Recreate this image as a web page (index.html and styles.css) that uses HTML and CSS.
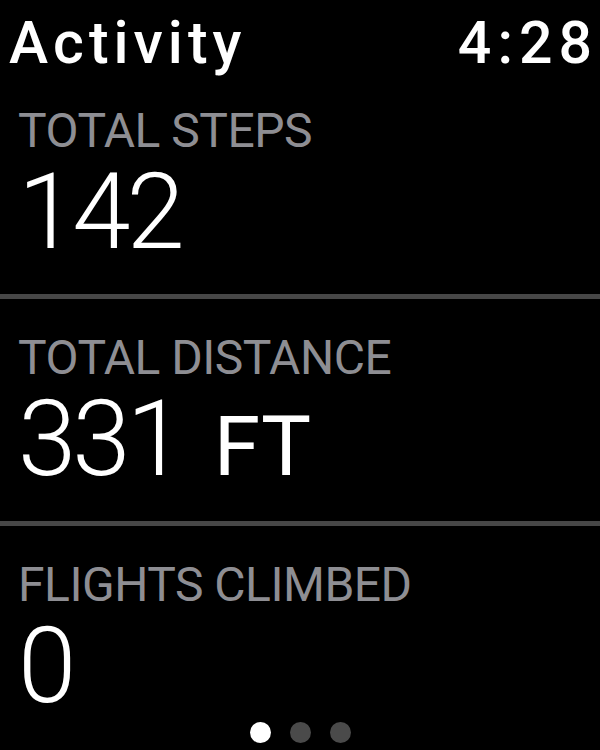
FILE: index.html
```html
<!DOCTYPE html>
<html lang="en">
<head>
    <meta charset="UTF-8">
    <meta name="viewport" content="width=device-width, initial-scale=1.0">
    <title>Activity</title>
    <link rel="stylesheet" href="styles.css">
</head>
<body>
    <div class="screen">
        <div class="top-bar">
            <h1 class="app-title">Activity</h1>
            <span class="clock">4:28</span>
        </div>
        <div class="stat">
            <div class="stat-label">TOTAL STEPS</div>
            <div class="stat-value">142</div>
        </div>
        <div class="divider"></div>
        <div class="stat">
            <div class="stat-label">TOTAL DISTANCE</div>
            <div class="stat-value">331<span class="unit">FT</span></div>
        </div>
        <div class="divider"></div>
        <div class="stat">
            <div class="stat-label">FLIGHTS CLIMBED</div>
            <div class="stat-value">0</div>
        </div>
        <div class="pager">
            <span class="dot current"></span>
            <span class="dot"></span>
            <span class="dot"></span>
        </div>
    </div>
</body>
</html>
```

FILE: styles.css
```css
body {
    margin: 0;
    background-color: #000;
    color: #fff;
    font-family: Roboto, "Liberation Sans", sans-serif;
}
.screen {
    height: 750px;
    overflow: hidden;
}
.top-bar {
    display: flex;
    justify-content: space-between;
    align-items: baseline;
    padding: 14px 8px 0 9px;
}
.app-title {
    margin: 0;
    font-size: 59px;
    line-height: 58px;
    font-weight: 500;
    letter-spacing: 5px;
}
.clock {
    font-size: 59px;
    line-height: 58px;
    font-weight: 500;
    letter-spacing: 6px;
    margin-right: -6px;
}
.stat {
    padding: 35px 0 29px 18px;
}
.stat-label {
    font-size: 48px;
    line-height: 48px;
    font-weight: 400;
    color: #8e8e93;
    letter-spacing: -0.5px;
}
.stat-value {
    margin-top: 5px;
    font-size: 105px;
    line-height: 105px;
    font-weight: 300;
    letter-spacing: -4px;
}
.unit {
    margin-left: 33px;
    font-size: 84px;
    line-height: 0;
    font-weight: 400;
    letter-spacing: 0;
}
.divider {
    height: 5px;
    background-color: #474747;
}
.pager {
    display: flex;
    justify-content: center;
    gap: 19px;
    margin-top: -26px;
}
.dot {
    width: 21px;
    height: 21px;
    border-radius: 50%;
    background-color: #4a4a4a;
}
.dot.current {
    background-color: #fff;
}
```
